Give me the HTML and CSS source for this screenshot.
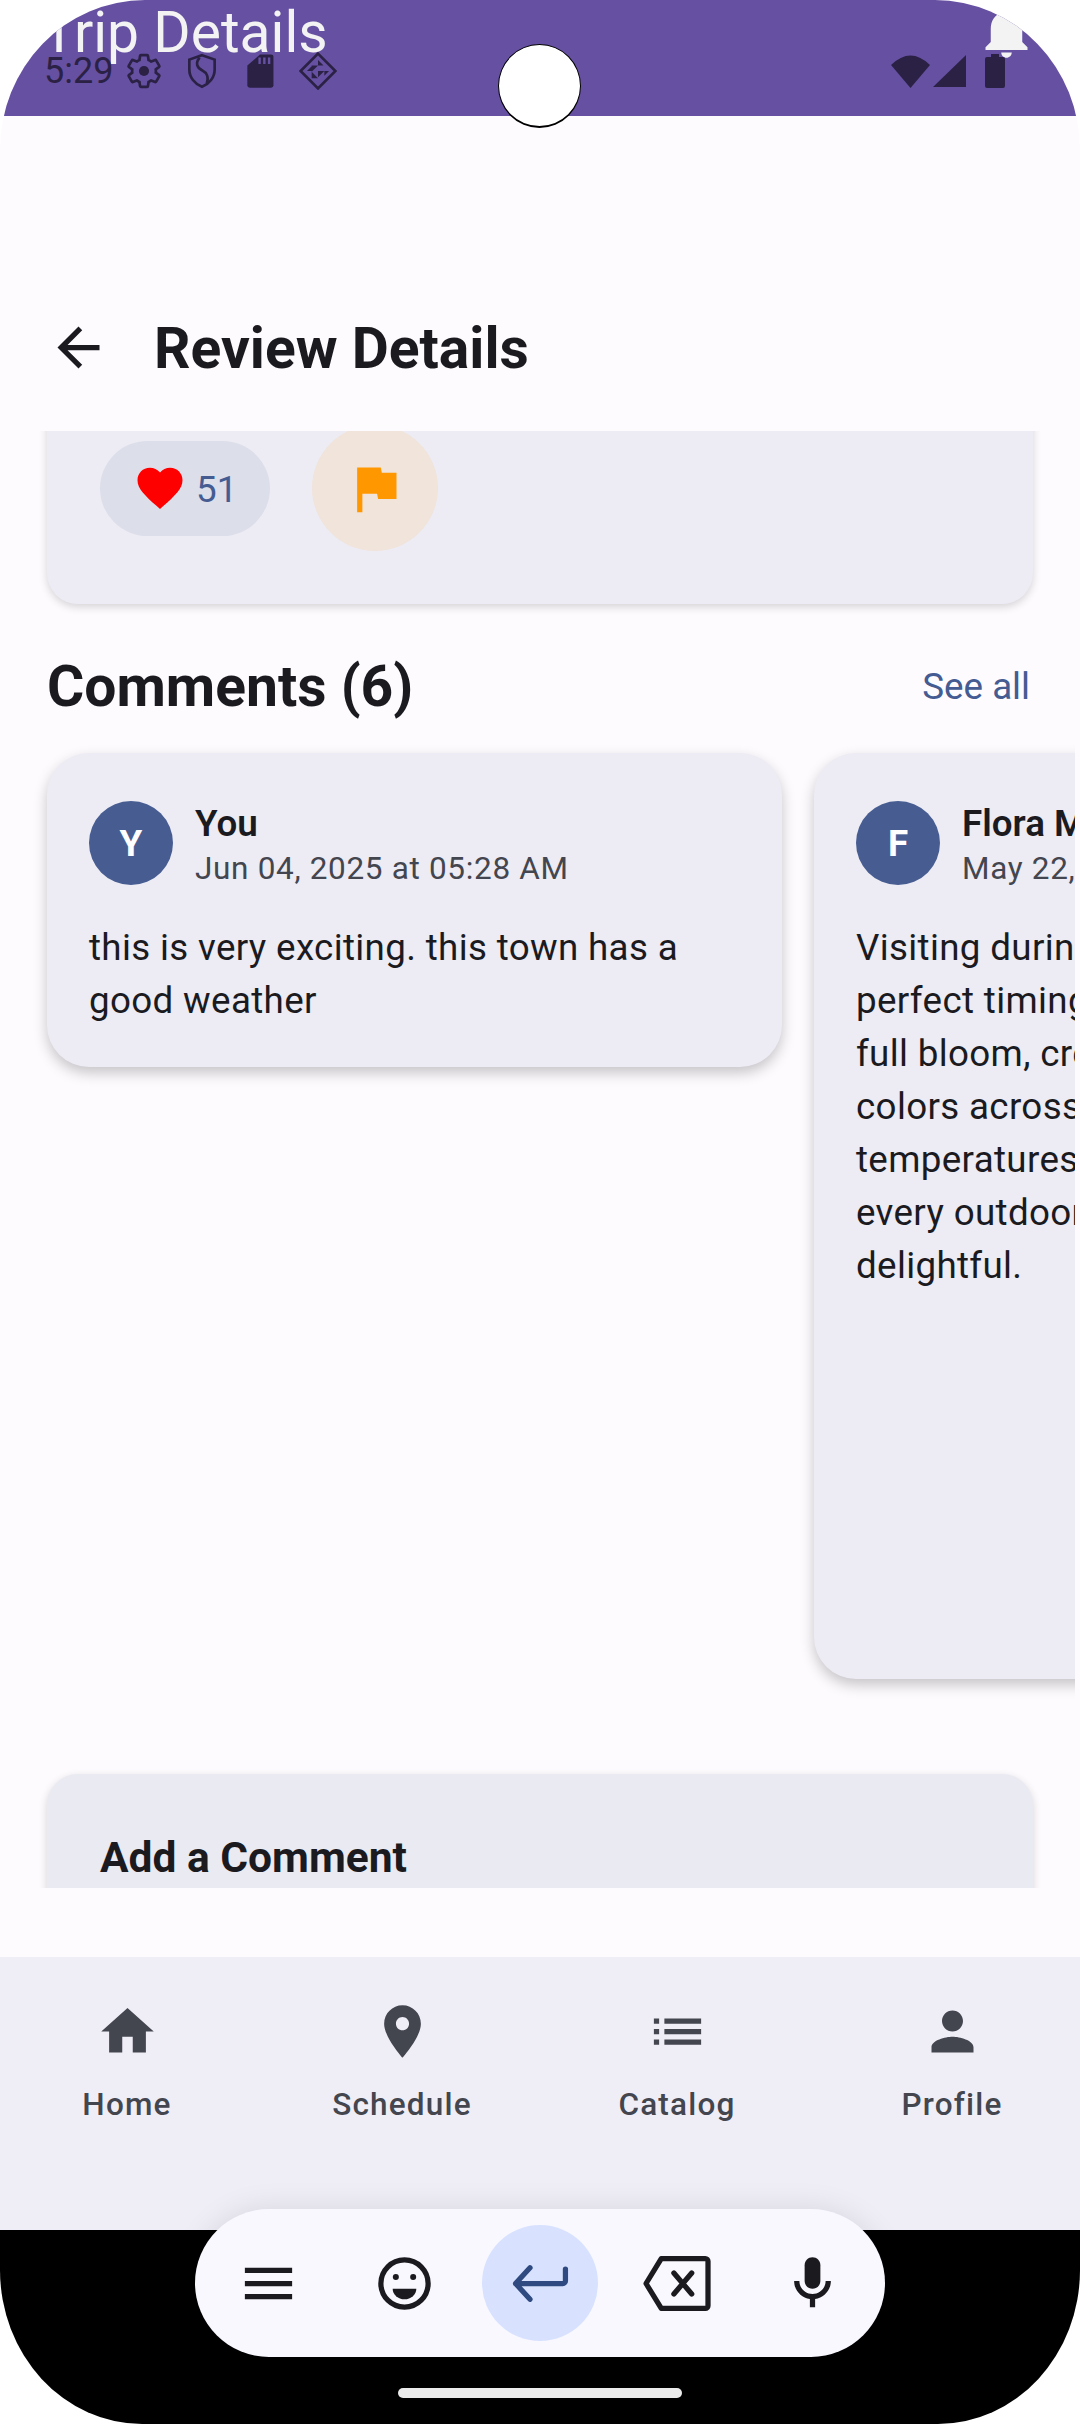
FILE: index.html
```html
<!DOCTYPE html>
<html>
<head>
  <meta charset="UTF-8">
  <meta name="viewport" content="width=device-width, initial-scale=1.0">
  <title>Review Details</title>
  <link rel="stylesheet" href="styles.css">
</head>
<body>
  <div class="screen">
    <div class="topbar">
      <div class="trip-title">Trip Details</div>
      <svg class="bell" viewBox="0 0 24 24"><path d="M12 22c1.1 0 2-.9 2-2h-4c0 1.1.89 2 2 2zm6-6v-5c0-3.07-1.64-5.64-4.5-6.32V4c0-.83-.67-1.5-1.5-1.5s-1.5.67-1.5 1.5v.68C7.63 5.36 6 7.92 6 11v5l-2 2v1h16v-1l-2-2z"/></svg>
      <div class="status">
        <span class="time">5:29</span>
        <svg class="status-icon" viewBox="0 0 24 24"><path class="line" d="M19.43 12.98c.04-.32.07-.64.07-.98s-.03-.66-.07-.98l2.11-1.65c.19-.15.24-.42.12-.64l-2-3.46c-.12-.22-.39-.3-.61-.22l-2.49 1c-.52-.4-1.08-.73-1.69-.98l-.38-2.65C14.46 2.18 14.25 2 14 2h-4c-.25 0-.46.18-.49.42l-.38 2.65c-.61.25-1.17.59-1.69.98l-2.49-1c-.23-.09-.49 0-.61.22l-2 3.46c-.13.22-.07.49.12.64l2.11 1.65c-.04.32-.07.65-.07.98s.03.66.07.98l-2.11 1.65c-.19.15-.24.42-.12.64l2 3.46c.12.22.39.3.61.22l2.49-1c.52.4 1.08.73 1.69.98l.38 2.65c.03.24.24.42.49.42h4c.25 0 .46-.18.49-.42l.38-2.65c.61-.25 1.17-.59 1.69-.98l2.49 1c.23.09.49 0 .61-.22l2-3.46c.12-.22.07-.49-.12-.64l-2.11-1.65z"/><circle cx="12" cy="12" r="3.2"/></svg>
        <svg class="status-icon" viewBox="0 0 24 24"><path class="line" d="M12 2l8 2.8V11c0 5-3.4 9.2-8 11-4.6-1.8-8-6-8-11V4.8L12 2z"/><path class="line" d="M10.5 3.5C7.5 7 9 10 12 11.5s4.5 4.5 3 8.5"/></svg>
        <svg class="status-icon" viewBox="0 0 24 24"><path d="M12 1.5h7a1.5 1.5 0 0 1 1.500 1.500v18a1.500 1.500 0 0 1-1.500 1.500H5.500A1.500 1.500 0 0 1 4 21V8.500z"/><path class="sd-pins" d="M11 3.500h1.500v4H11zm3 0h1.500v4H14zm3 0h1.500v4H17z"/></svg>
        <svg class="status-icon" viewBox="0 0 24 24"><path class="line" d="M12 1l11 11-11 11L1 12z"/><path d="M12 5l3.500 3.500H12zM8 8.500h4L8 12.500zM12 12h4l-4 4zM16 12l3 0-3 3zM8 12.500l4 4H8zM5 12l3-3v3z"/></svg>
        <span class="status-right">
          <svg class="wifi" viewBox="0 0 39 33"><path d="M0 10Q19.500-9 39 10L19.500 33z"/></svg>
          <svg class="signal" viewBox="0 0 33 32"><path d="M33 0v32H0z"/></svg>
          <svg class="battery" viewBox="0 0 20 34"><path d="M6 0h8v3h4a2 2 0 0 1 2 2v27a2 2 0 0 1-2 2H2a2 2 0 0 1-2-2V5a2 2 0 0 1 2-2h4z"/></svg>
        </span>
      </div>
    </div>

    <div class="header">
      <svg class="back" viewBox="0 0 24 24"><path d="M20 11H7.830l5.590-5.590L12 4l-8 8 8 8 1.410-1.410L7.830 13H20v-2z"/></svg>
      <h1>Review Details</h1>
    </div>

    <div class="scroll">
      <div class="review-card">
        <div class="actions">
          <div class="like-pill">
            <svg class="heart" viewBox="0 0 24 24"><path d="M12 21.350l-1.450-1.320C5.400 15.360 2 12.280 2 8.500 2 5.420 4.420 3 7.500 3c1.740 0 3.410.81 4.500 2.090C13.090 3.810 14.760 3 16.500 3 19.580 3 22 5.420 22 8.500c0 3.780-3.400 6.860-8.550 11.540L12 21.350z"/></svg>
            <span class="like-count">51</span>
          </div>
          <div class="flag-btn">
            <svg class="flag" viewBox="0 0 24 24"><path d="M14.400 6L14 4H5v17h2v-7h5.600l.4 2h7V6z"/></svg>
          </div>
        </div>
      </div>

      <div class="comments-head">
        <h2>Comments (6)</h2>
        <span class="see-all">See all</span>
      </div>

      <div class="comments-row">
        <div class="comment">
          <div class="comment-head">
            <div class="avatar">Y</div>
            <div class="comment-meta">
              <div class="name">You</div>
              <div class="date">Jun 04, 2025 at 05:28 AM</div>
            </div>
          </div>
          <p>this is very exciting. this town has a<br>good weather</p>
        </div>
        <div class="comment comment-long">
          <div class="comment-head">
            <div class="avatar">F</div>
            <div class="comment-meta">
              <div class="name">Flora Martinez</div>
              <div class="date">May 22, 2025 at 10:14 AM</div>
            </div>
          </div>
          <p>Visiting during the spring was<br>perfect timing with flowers in<br>full bloom, creating vibrant<br>colors across the town. Mild<br>temperatures throughout made<br>every outdoor activity truly<br>delightful.</p>
        </div>
      </div>

      <div class="add-card">
        <h3>Add a Comment</h3>
      </div>
    </div>

    <div class="nav">
      <div class="nav-item">
        <svg viewBox="0 0 24 24"><path d="M10 20v-6h4v6h5v-8h3L12 3 2 12h3v8z"/></svg>
        <span>Home</span>
      </div>
      <div class="nav-item">
        <svg viewBox="0 0 24 24"><path d="M12 2C8.130 2 5 5.130 5 9c0 5.250 7 13 7 13s7-7.750 7-13c0-3.870-3.130-7-7-7zm0 9.500c-1.380 0-2.500-1.120-2.500-2.500s1.120-2.500 2.500-2.500 2.500 1.120 2.500 2.500-1.120 2.500-2.500 2.500z"/></svg>
        <span>Schedule</span>
      </div>
      <div class="nav-item">
        <svg viewBox="0 0 24 24"><path d="M3 13h2v-2H3v2zm0 4h2v-2H3v2zm0-8h2V7H3v2zm4 4h14v-2H7v2zm0 4h14v-2H7v2zM7 7v2h14V7H7z"/></svg>
        <span>Catalog</span>
      </div>
      <div class="nav-item">
        <svg viewBox="0 0 24 24"><path d="M12 12c2.210 0 4-1.790 4-4s-1.790-4-4-4-4 1.790-4 4 1.790 4 4 4zm0 2c-2.670 0-8 1.340-8 4v2h16v-2c0-2.660-5.330-4-8-4z"/></svg>
        <span>Profile</span>
      </div>
    </div>

    <div class="system-bar">
      <div class="home-line"></div>
    </div>

    <div class="camera"></div>

    <div class="keyboard">
      <div class="key">
        <svg viewBox="0 0 24 24"><path d="M3 18h18v-2H3v2zm0-5h18v-2H3v2zm0-7v2h18V6H3z"/></svg>
      </div>
      <div class="key">
        <svg viewBox="0 0 24 24"><circle class="line" cx="12" cy="12" r="9"/><circle cx="8.700" cy="9.500" r="1.150"/><circle cx="15.300" cy="9.500" r="1.150"/><path d="M7.500 14h9a4.500 4 0 0 1-9 0z"/></svg>
      </div>
      <div class="key key-enter">
        <svg viewBox="0 0 24 24"><path class="line" d="M2.500 12h18a1 1 0 0 0 1-1V6.500M8 6l-5.500 6L8 18"/></svg>
      </div>
      <div class="key">
        <svg viewBox="0 0 24 24"><path class="line" d="M6.200 2.500H23a1 1 0 0 1 1 1v17a1 1 0 0 1-1 1H6.200L.4 12z"/><path class="line" d="M11 8l6.800 8m0-8L11 16"/></svg>
      </div>
      <div class="key">
        <svg viewBox="0 0 24 24"><path d="M12 14c1.660 0 3-1.340 3-3V5c0-1.660-1.340-3-3-3S9 3.340 9 5v6c0 1.660 1.340 3 3 3z"/><path d="M17 11c0 2.760-2.240 5-5 5s-5-2.240-5-5H5c0 3.530 2.610 6.430 6 6.920V21h2v-3.080c3.390-.49 6-3.390 6-6.920h-2z"/></svg>
      </div>
    </div>
  </div>
</body>
</html>
```

FILE: styles.css
```css
* {
  box-sizing: border-box;
}

body {
  margin: 0;
  background-color: #fff;
  font-family: Roboto, "Liberation Sans", sans-serif;
  color: #1b1b1f;
}

h1,
h2,
h3,
p {
  margin: 0;
}

.screen {
  position: relative;
  width: 1080px;
  height: 2424px;
  display: flex;
  flex-direction: column;
  overflow: hidden;
  background-color: #fefbff;
  border-radius: 145px 145px 142px 142px / 150px 150px 154px 154px;
}

/* status bar, the app bar behind it shows through */
.topbar {
  position: relative;
  height: 116px;
  flex: none;
  background-color: #6650a2;
}

.trip-title {
  position: absolute;
  left: 42px;
  top: -1px;
  font-size: 57px;
  line-height: 68px;
  color: #f3f3f3;
}

.bell {
  position: absolute;
  left: 975px;
  top: 0;
  width: 63px;
  height: 63px;
  fill: #f3f3f3;
}

.status {
  position: relative;
  display: flex;
  align-items: center;
  height: 38px;
  padding-left: 44px;
  padding-right: 75px;
  gap: 20px;
  top: 52px;
  color: #2b2145;
}

.time {
  width: 61px;
  font-size: 36px;
  line-height: 38px;
}

.status-icon {
  width: 38px;
  height: 38px;
  fill: #2b2145;
}

.status-icon .line {
  fill: none;
  stroke: #2b2145;
  stroke-width: 1.700;
}

.status-icon .sd-pins {
  fill: #6650a2;
}

.status-right {
  display: flex;
  align-items: center;
  margin-left: auto;
  fill: #2b2145;
}

.wifi {
  width: 39px;
  height: 33px;
}

.signal {
  width: 33px;
  height: 32px;
  margin-left: 3px;
}

.battery {
  width: 20px;
  height: 34px;
  margin-left: 19px;
}

.header {
  height: 315px;
  flex: none;
  display: flex;
  align-items: flex-end;
  padding: 0 0 47px 47px;
  gap: 44px;
}

.back {
  width: 63px;
  height: 63px;
  margin-bottom: 5px;
  fill: #1b1b1f;
}

.header h1 {
  font-size: 57px;
  line-height: 70px;
  font-weight: 700;
}

.scroll {
  height: 1457px;
  flex: none;
  overflow: hidden;
}

.review-card {
  height: 213px;
  margin: -40px 47px 0;
  padding: 34px 53px 0;
  background-color: #edecf4;
  border-radius: 31px;
  box-shadow: 0 3px 8px rgba(0, 0, 0, 0.16);
}

.actions {
  display: flex;
  align-items: center;
  gap: 42px;
}

.like-pill {
  width: 170px;
  height: 95px;
  display: flex;
  align-items: center;
  padding-left: 33px;
  gap: 9px;
  background-color: #dcdeea;
  border-radius: 48px;
  font-size: 36.750px;
  color: #445c92;
}

.like-count {
  padding-top: 3px;
}

.heart {
  width: 54px;
  height: 54px;
  fill: #ff0000;
}

.flag-btn {
  width: 126px;
  height: 126px;
  display: flex;
  align-items: center;
  justify-content: center;
  background-color: #f0e4db;
  border-radius: 50%;
}

.flag {
  width: 63px;
  height: 63px;
  fill: #ff9800;
}

.comments-head {
  display: flex;
  align-items: center;
  justify-content: space-between;
  margin: 47px 50px 0 47px;
  height: 70px;
}

.comments-head h2 {
  font-size: 57px;
  font-weight: 700;
}

.see-all {
  font-size: 36.750px;
  color: #445c92;
}

.comments-row {
  display: flex;
  align-items: flex-start;
  gap: 32px;
  width: 1075px;
  overflow: hidden;
  padding: 20px 0 40px 47px;
  margin-top: 12px;
}

.comment {
  flex: none;
  width: 735px;
  padding: 45px 42px 40px;
  background-color: #edecf4;
  border-radius: 42px;
  box-shadow: 0 6px 14px rgba(0, 0, 0, 0.22);
}

.comment-long {
  height: 926px;
}

.comment-head {
  display: flex;
  align-items: center;
  height: 90px;
  gap: 22px;
  margin-bottom: 33px;
}

.comment-meta {
  margin-top: 6px;
}

.avatar {
  width: 84px;
  height: 84px;
  display: flex;
  align-items: center;
  justify-content: center;
  background-color: #475d92;
  border-radius: 50%;
  color: #fff;
  font-size: 36.750px;
  font-weight: 700;
}

.name {
  font-size: 36.750px;
  line-height: 46px;
  font-weight: 600;
  white-space: nowrap;
}

.date {
  font-size: 31.500px;
  line-height: 44px;
  letter-spacing: 0.670px;
  color: #44464f;
  white-space: nowrap;
}

.comment p {
  font-size: 36.750px;
  line-height: 53px;
  letter-spacing: 0.340px;
  white-space: nowrap;
}

.add-card {
  height: 300px;
  margin: 55px 47px 0;
  padding-top: 56px;
  padding-left: 53px;
  background-color: #eaeaf2;
  border-radius: 31px;
  box-shadow: 0 3px 8px rgba(0, 0, 0, 0.16);
}

.add-card h3 {
  font-size: 42.500px;
  line-height: 55px;
  font-weight: 700;
}

.nav {
  margin-top: 69px;
  height: 273px;
  flex: none;
  display: flex;
  justify-content: space-between;
  padding-right: 1px;
  background-color: #efeef7;
}

.nav-item {
  width: 254px;
  padding-top: 43px;
  display: flex;
  flex-direction: column;
  align-items: center;
  color: #44464f;
  font-size: 31.500px;
  font-weight: 500;
  letter-spacing: 1.200px;
}

.nav-item svg {
  width: 63px;
  height: 63px;
  fill: #44464f;
}

.nav-item span {
  margin-top: 21px;
  line-height: 42px;
}

.system-bar {
  flex: 1;
  display: flex;
  align-items: flex-end;
  justify-content: center;
  padding-bottom: 26px;
  background-color: #000;
}

.home-line {
  width: 284px;
  height: 10px;
  background-color: #ebebeb;
  border-radius: 5px;
}

/* things lying over the page */
.camera {
  position: absolute;
  left: 498px;
  top: 44px;
  width: 83px;
  height: 84px;
  background-color: #fff;
  border: 1px solid #000;
  border-bottom-width: 2px;
  border-radius: 50%;
}

.keyboard {
  position: absolute;
  left: 195px;
  bottom: 67px;
  width: 690px;
  height: 148px;
  display: flex;
  align-items: center;
  justify-content: center;
  gap: 73px;
  background-color: #f9f8ff;
  border-radius: 74px;
  box-shadow: 0 0 30px rgba(0, 0, 0, 0.1);
}

.key {
  width: 63px;
  height: 63px;
  display: flex;
  align-items: center;
  justify-content: center;
}

.key svg {
  width: 63px;
  height: 63px;
  flex: none;
  overflow: visible;
  fill: #1b1b1f;
}

.key .line {
  fill: none;
  stroke: #1b1b1f;
  stroke-width: 2;
  stroke-linecap: round;
  stroke-linejoin: round;
}

.key-enter {
  width: 116px;
  height: 116px;
  margin: 0 -26.500px;
  background-color: #d8e2ff;
  border-radius: 50%;
}

.key-enter .line {
  stroke: #2f4a80;
}
```
